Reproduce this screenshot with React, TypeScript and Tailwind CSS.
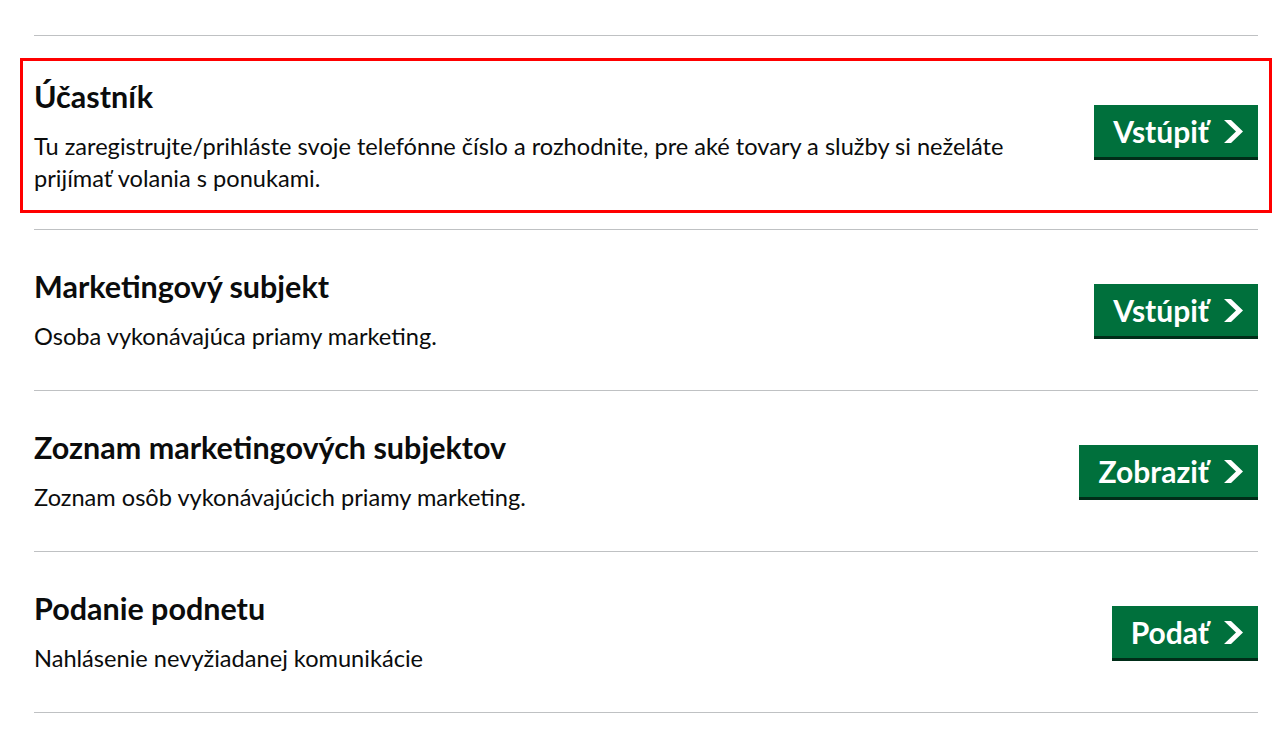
import React from 'react';

type Entry = {
  title: string;
  description: string;
  action: string;
  highlighted?: boolean;
};

const entries: Entry[] = [
  {
    title: 'Účastník',
    description:
      'Tu zaregistrujte/prihláste svoje telefónne číslo a rozhodnite, pre aké tovary a služby si neželáte prijímať volania s ponukami.',
    action: 'Vstúpiť',
    highlighted: true,
  },
  {
    title: 'Marketingový subjekt',
    description: 'Osoba vykonávajúca priamy marketing.',
    action: 'Vstúpiť',
  },
  {
    title: 'Zoznam marketingových subjektov',
    description: 'Zoznam osôb vykonávajúcich priamy marketing.',
    action: 'Zobraziť',
  },
  {
    title: 'Podanie podnetu',
    description: 'Nahlásenie nevyžiadanej komunikácie',
    action: 'Podať',
  },
];

const Chevron: React.FC = () => (
  <svg width="19" height="23" viewBox="0 0 19 23" fill="currentColor" aria-hidden="true">
    <polygon points="0,0 7,0 19,11.5 7,23 0,23 12,11.5" />
  </svg>
);

const ActionButton: React.FC<{ label: string; raised?: boolean }> = ({ label, raised }) => (
  <button
    type="button"
    className={`flex h-[52px] shrink-0 items-center gap-[15px] bg-[#00703c] pl-[19px] pr-[15px] text-[30px] font-bold leading-none text-white shadow-[0_3px_0_#002d18] ${
      raised ? 'mb-[9px]' : ''
    }`}
  >
    {label}
    <Chevron />
  </button>
);

const EntryContent: React.FC<{ entry: Entry }> = ({ entry }) => (
  <>
    <div className="min-w-0 flex-1 pr-[30px]">
      <h2 className="text-[30.5px] font-bold leading-[36px] text-[#0b0c0c]">{entry.title}</h2>
      <p className="mt-[16px] max-w-[1020px] text-[23.6px] leading-[32px] text-[#0b0c0c]">{entry.description}</p>
    </div>
    <ActionButton label={entry.action} raised={entry.highlighted} />
  </>
);

const App: React.FC = () => {
  return (
    <div className="min-h-screen bg-white font-['Lato','Liberation_Sans',sans-serif] text-[#0b0c0c]">
      <div className="px-[34px] pt-[35px] pr-[22px]">
        <div className="border-t border-[#bfc1c3]">
          {entries.map((entry) =>
            entry.highlighted ? (
              <div key={entry.title} className="border-b border-[#bfc1c3] pt-[22px] pb-[16px]">
                {/* highlighted entry, outlined in red */}
                <div className="-mx-[14px] flex h-[155px] items-center border-[3px] border-[#ff0000] px-[11px]">
                  <EntryContent entry={entry} />
                </div>
              </div>
            ) : (
              <div key={entry.title} className="flex h-[161px] items-center border-b border-[#bfc1c3]">
                <EntryContent entry={entry} />
              </div>
            )
          )}
        </div>
      </div>
    </div>
  );
};

export default App;
